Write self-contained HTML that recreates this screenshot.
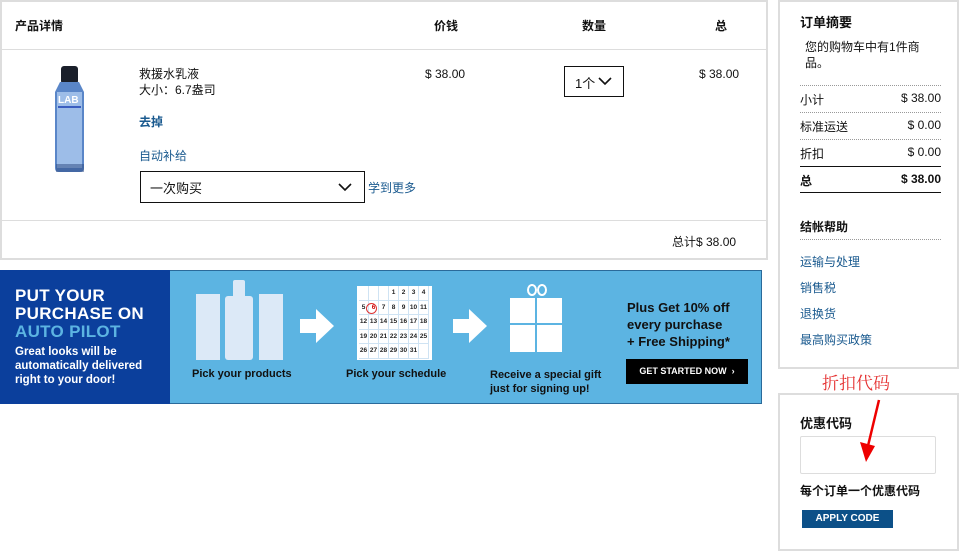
<!DOCTYPE html>
<html><head><meta charset="utf-8"><style>
*{margin:0;padding:0;box-sizing:border-box}
body{width:959px;height:553px;background:#fff;font-family:"Liberation Sans","Noto Sans CJK SC",sans-serif;font-size:12px;color:#111;position:relative;overflow:hidden}
.abs{position:absolute}
.box{position:absolute;border:2px solid #ddd}
.b{font-weight:bold}
.blue{color:#1a5a8f}
.cal{display:grid;grid-template-columns:repeat(7,10px);grid-auto-rows:14.5px;gap:0;font-size:6.5px;font-weight:bold;color:#222;text-align:center;line-height:14.5px}
.cal span{border-right:1px solid #cfe3f3;border-bottom:1px solid #cfe3f3}
</style></head><body>
<div class="box" style="left:0;top:0;width:768px;height:260px"></div>
<div class="abs" style="left:2px;top:49px;width:764px;border-top:1px solid #ddd"></div>
<div class="abs" style="left:2px;top:220px;width:764px;border-top:1px solid #ddd"></div>
<div class="abs b" style="left:15px;top:17px">产品详情</div>
<div class="abs b" style="left:434px;top:17px">价钱</div>
<div class="abs b" style="left:582px;top:17px">数量</div>
<div class="abs b" style="left:715px;top:17px">总</div>
<svg class="abs" style="left:50px;top:64px" width="40" height="112" viewBox="0 0 40 112">
<rect x="11" y="2" width="17" height="18" rx="3" fill="#1a1f2a"/>
<path d="M10 18 H29 Q32 24 34 28 V104 Q34 108 30 108 H9 Q5 108 5 104 V28 Q7 24 10 18Z" fill="#5a86c8"/>
<rect x="7" y="28" width="25" height="76" fill="#9dbde8"/>
<text x="8" y="39" font-size="10" fill="#fff" font-family="Liberation Sans" font-weight="bold">LAB</text>
<rect x="8" y="42" width="23" height="2" fill="#3a5dc0"/>
<rect x="6" y="100" width="28" height="8" fill="#2d4a80" opacity=".5"/>
</svg>
<div class="abs" style="left:139px;top:66px;line-height:16px">救援水乳液<br>大小：6.7盎司</div>
<div class="abs b blue" style="left:139px;top:113px">去掉</div>
<div class="abs blue" style="left:139px;top:147px">自动补给</div>
<div class="abs" style="left:140px;top:171px;width:225px;height:32px;border:1px solid #111"></div>
<div class="abs" style="left:150px;top:178px;font-size:13px">一次购买</div>
<svg class="abs" style="left:338px;top:183px" width="14" height="9"><path d="M1 1 L7 7 L13 1" stroke="#111" stroke-width="1.6" fill="none"/></svg>
<div class="abs blue" style="left:368px;top:179px">学到更多</div>
<div class="abs" style="left:425px;top:67px">$ 38.00</div>
<div class="abs" style="left:564px;top:66px;width:60px;height:31px;border:1px solid #111"></div>
<div class="abs" style="left:575px;top:73px;font-size:13px">1个</div>
<svg class="abs" style="left:598px;top:77px" width="14" height="9"><path d="M1 1 L7 7 L13 1" stroke="#111" stroke-width="1.6" fill="none"/></svg>
<div class="abs" style="left:699px;top:67px">$ 38.00</div>
<div class="abs" style="left:672px;top:233px">总计$ 38.00</div>

<div class="abs" style="left:0;top:270px;width:762px;height:134px;background:#5cb4e2;border:1px solid #2a6a9a"></div>
<div class="abs" style="left:0;top:270px;width:170px;height:134px;background:#0b3f9c"></div>
<div class="abs b" style="left:15px;top:287px;color:#fff;font-size:17px;line-height:18px;letter-spacing:.3px">PUT YOUR<br>PURCHASE ON<br><span style="color:#5cb4e2">AUTO PILOT</span></div>
<div class="abs b" style="left:15px;top:345px;color:#fff;font-size:11.5px;line-height:14px">Great looks will be<br>automatically delivered<br>right to your door!</div>
<div class="abs" style="left:196px;top:294px;width:24px;height:66px;background:#dce9f7"></div>
<div class="abs" style="left:225px;top:296px;width:28px;height:64px;background:#dce9f7;border-radius:3px"></div>
<div class="abs" style="left:233px;top:280px;width:12px;height:18px;background:#dce9f7;border-radius:2px"></div>
<div class="abs" style="left:259px;top:294px;width:24px;height:66px;background:#dce9f7"></div>
<div class="abs b" style="left:192px;top:368px;font-size:11px">Pick your products</div>
<svg class="abs" style="left:300px;top:309px" width="34" height="34"><path d="M0 10 H16 V0 L34 17 L16 34 V24 H0Z" fill="#fff"/></svg>
<svg class="abs" style="left:453px;top:309px" width="34" height="34"><path d="M0 10 H16 V0 L34 17 L16 34 V24 H0Z" fill="#fff"/></svg>
<div class="abs cal" style="left:357px;top:286px;width:75px;height:74px;background:#fff;padding:0 2px">
<span></span><span></span><span></span><span>1</span><span>2</span><span>3</span><span>4</span>
<span>5</span><span style="color:#c00">6</span><span>7</span><span>8</span><span>9</span><span>10</span><span>11</span>
<span>12</span><span>13</span><span>14</span><span>15</span><span>16</span><span>17</span><span>18</span>
<span>19</span><span>20</span><span>21</span><span>22</span><span>23</span><span>24</span><span>25</span>
<span>26</span><span>27</span><span>28</span><span>29</span><span>30</span><span>31</span><span></span>
</div>
<div class="abs" style="left:366px;top:303px;width:11px;height:11px;border:1.5px solid #d33;border-radius:50%"></div>
<div class="abs b" style="left:346px;top:368px;font-size:11px">Pick your schedule</div>
<div class="abs" style="left:510px;top:298px;width:52px;height:54px;background:#fff"></div>
<div class="abs" style="left:535px;top:298px;width:2px;height:54px;background:#5cb4e2"></div>
<div class="abs" style="left:510px;top:323px;width:52px;height:2px;background:#5cb4e2"></div>
<div class="abs" style="left:527px;top:284px;width:10px;height:12px;border:2px solid #fff;border-radius:50%"></div>
<div class="abs" style="left:537px;top:284px;width:10px;height:12px;border:2px solid #fff;border-radius:50%"></div>
<div class="abs b" style="left:490px;top:368px;font-size:11px;line-height:14px">Receive a special gift<br>just for signing up!</div>
<div class="abs b" style="left:627px;top:299px;font-size:13px;line-height:17px;color:#111">Plus Get 10% off<br>every purchase<br>+ Free Shipping*</div>
<div class="abs b" style="left:626px;top:359px;width:122px;height:25px;background:#000;color:#fff;font-size:9px;line-height:25px;text-align:center">GET STARTED NOW &nbsp;›</div>

<div class="box" style="left:778px;top:0;width:181px;height:369px"></div>
<div class="abs b" style="left:800px;top:12px;font-size:13px">订单摘要</div>
<div class="abs" style="left:805px;top:39px;line-height:16px">您的购物车中有1件商<br>品。</div>
<div class="abs" style="left:800px;top:85px;width:141px;border-top:1px dotted #999"></div>
<div class="abs" style="left:800px;top:91px;width:141px;display:flex;justify-content:space-between"><span>小计</span><span>$ 38.00</span></div>
<div class="abs" style="left:800px;top:112px;width:141px;border-top:1px dotted #999"></div>
<div class="abs" style="left:800px;top:118px;width:141px;display:flex;justify-content:space-between"><span>标准运送</span><span>$ 0.00</span></div>
<div class="abs" style="left:800px;top:139px;width:141px;border-top:1px dotted #999"></div>
<div class="abs" style="left:800px;top:145px;width:141px;display:flex;justify-content:space-between"><span>折扣</span><span>$ 0.00</span></div>
<div class="abs" style="left:800px;top:166px;width:141px;border-top:1px solid #111"></div>
<div class="abs b" style="left:800px;top:172px;width:141px;display:flex;justify-content:space-between"><span>总</span><span>$ 38.00</span></div>
<div class="abs" style="left:800px;top:192px;width:141px;border-top:1px solid #111"></div>
<div class="abs b" style="left:800px;top:218px">结帐帮助</div>
<div class="abs" style="left:800px;top:239px;width:141px;border-top:1px dotted #999"></div>
<div class="abs blue" style="left:800px;top:249px;line-height:26px">运输与处理<br>销售税<br>退换货<br>最高购买政策</div>

<div class="abs" style="left:822px;top:369px;color:#e53030;font-size:17px;font-family:'Noto Serif CJK SC',serif">折扣代码</div>
<div class="box" style="left:778px;top:393px;width:181px;height:158px"></div>
<div class="abs b" style="left:800px;top:413px;font-size:13px">优惠代码</div>
<div class="abs" style="left:800px;top:436px;width:136px;height:38px;border:1px solid #ddd;border-radius:2px"></div>
<svg class="abs" style="left:855px;top:398px" width="30" height="66"><path d="M24 2 L12 52" stroke="#e00" stroke-width="2.5"/><path d="M5 44 L11 64 L20 48Z" fill="#e00"/></svg>
<div class="abs b" style="left:800px;top:482px">每个订单一个优惠代码</div>
<div class="abs b" style="left:802px;top:510px;width:91px;height:18px;background:#0c5088;color:#fff;font-size:10px;line-height:18px;text-align:center">APPLY CODE</div>
</body></html>
